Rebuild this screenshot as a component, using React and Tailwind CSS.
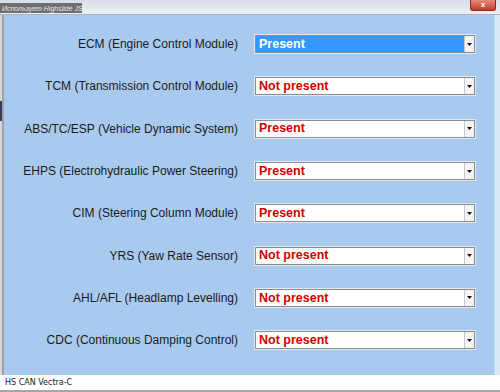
const modules = [
  { label: 'ECM (Engine Control Module)', value: 'Present', selected: true },
  { label: 'TCM (Transmission Control Module)', value: 'Not present' },
  { label: 'ABS/TC/ESP (Vehicle Dynamic System)', value: 'Present' },
  { label: 'EHPS (Electrohydraulic Power Steering)', value: 'Present' },
  { label: 'CIM (Steering Column Module)', value: 'Present' },
  { label: 'YRS (Yaw Rate Sensor)', value: 'Not present' },
  { label: 'AHL/AFL (Headlamp Levelling)', value: 'Not present' },
  { label: 'CDC (Continuous Damping Control)', value: 'Not present' }
]

function Select({ value, selected }) {
  return (
    <div className="flex w-[220px] h-[18px] border border-[#8c8c8c] bg-white shadow-[0_0_0_1px_#dfe8f3]">
      <div
        className={`flex-1 flex items-center pl-[3px] text-[12.5px] font-bold leading-none ${
          selected ? 'bg-[#3399ff] text-white' : 'text-[#d40000]'
        }`}
        style={{ fontFamily: '"Liberation Sans", Arial, sans-serif' }}
      >
        {value}
      </div>
      <div className="w-[10px] flex items-center justify-center bg-[#f4f4f4] border-l border-[#c8c8c8]">
        <svg width="5" height="3" viewBox="0 0 5 3">
          <path d="M0 0h5L2.5 3z" fill="#111" />
        </svg>
      </div>
    </div>
  )
}

export default function App() {
  return (
    <div
      className="w-[500px] h-[392px] flex flex-col bg-white overflow-hidden"
      style={{ fontFamily: '"Liberation Sans", Arial, sans-serif' }}
    >
      {/* window chrome */}
      <div className="h-[15px] flex justify-between bg-gradient-to-b from-[#d8dee5] to-[#eef2f6] border-b border-[#a9b1ba]">
        <div className="mt-[3px] h-[10px] w-[82px] bg-[#6e6e6e] flex items-center pl-[2px] text-[7px] italic text-[#e8e8e8] leading-none whitespace-nowrap">
          Использует Highslide JS
        </div>
        <div className="mr-[4px] w-[26px] h-[11px] rounded-b-[3px] bg-gradient-to-b from-[#e8887a] to-[#c0392b] border border-[#8e2a20] border-t-0 flex items-center justify-center text-white text-[8px] font-bold leading-none">
          x
        </div>
      </div>

      <div className="flex-1 flex">
        <div className="w-[4px] flex flex-col bg-[#d6d6d6] border-r-2 border-[#a2a2a2]">
          <div className="mt-[86px] h-[20px] w-[2px] bg-[#3a3a5a]" />
        </div>
        <div className="flex-1 bg-[#a9caef] pt-[8px]">
          {modules.map((m) => (
            <div key={m.label} className="h-[42.3px] flex items-center">
              <div className="w-[234px] text-right text-[12px] text-[#1a1a1a] whitespace-nowrap">
                {m.label}
              </div>
              <div className="ml-[17px]">
                <Select value={m.value} selected={m.selected} />
              </div>
            </div>
          ))}
        </div>
        <div className="w-[6px] bg-[#dbe8f6] border-l border-[#c4d8ee]" />
      </div>

      <div className="h-[17px] flex items-center pl-[5px] bg-white border-b-2 border-[#a6a6a6]">
        <span
          className="text-[8px] text-[#222] leading-none"
          style={{ fontFamily: '"DejaVu Sans", Verdana, sans-serif' }}
        >
          HS CAN Vectra-C
        </span>
      </div>
    </div>
  )
}
